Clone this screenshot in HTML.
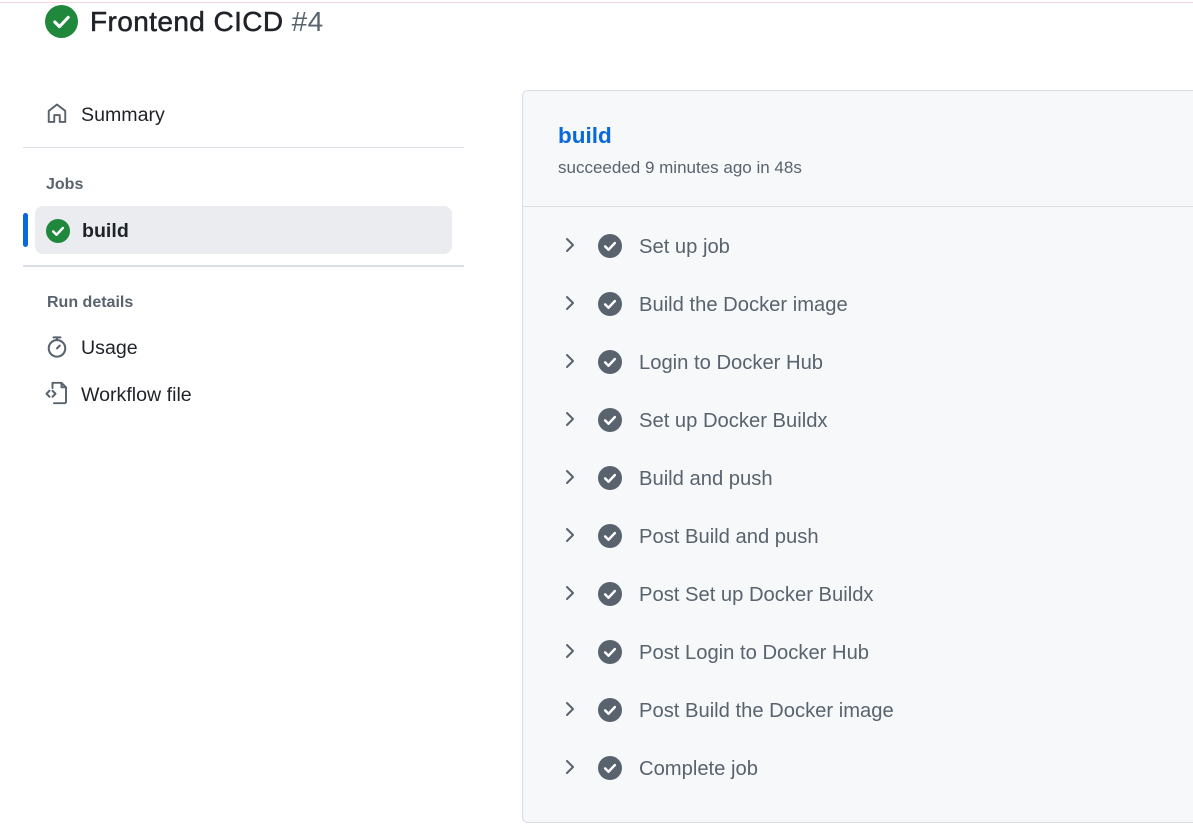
<!DOCTYPE html>
<html><head><style>
*{margin:0;padding:0;box-sizing:border-box}
body{width:1193px;height:826px;background:#fff;font-family:"Liberation Sans",sans-serif;position:relative;overflow:hidden;color:#1f2328}
.abs{position:absolute}
.topline{left:0;top:2px;width:1193px;height:1px;background:#f5d5db}
.title{left:90px;top:4px;font-size:28px;line-height:36px;color:#1f2328;letter-spacing:0.4px;-webkit-text-stroke:0.5px #1f2328}
.title span{color:#59636e;-webkit-text-stroke:0}
.nav{font-size:19.6px;line-height:24px;color:#1f2328}
.hdr{font-size:16px;color:#59636e;font-weight:bold}
.sep{height:1px;background:#d8dee4;left:23px;width:441px}
.panel{left:522px;top:90px;width:700px;height:733px;background:#f6f8fa;border:1px solid #d8dee4;border-radius:6px}
.step{left:0;font-size:20.2px;color:#59636e;line-height:24px}
</style></head><body>
<div class="abs topline"></div>
<svg class="abs" style="left:45px;top:5px" width="33" height="33" viewBox="0 0 32 32"><circle cx="16" cy="16" r="16" fill="#1f883d"/><path d="M9.5 16.5l4.5 4.5 8.5-9" stroke="#fff" stroke-width="3" fill="none" stroke-linecap="round" stroke-linejoin="round"/></svg>
<div class="abs title">Frontend CICD <span>#4</span></div>

<svg class="abs" style="left:46px;top:102px" width="22" height="22" viewBox="0 0 16 16"><path d="M2 14.5V6.5L8 1.8l6 4.7v8H10V9.5H6v5z" fill="none" stroke="#59636e" stroke-width="1.4" stroke-linejoin="round"/></svg>
<div class="abs nav" style="left:81px;top:103px">Summary</div>
<div class="abs sep" style="top:147px"></div>
<div class="abs hdr" style="left:46px;top:176px">Jobs</div>
<div class="abs" style="left:23px;top:213px;width:5px;height:34px;background:#0969da;border-radius:3px"></div>
<div class="abs" style="left:35px;top:206px;width:417px;height:48px;background:#eaecef;border-radius:8px"></div>
<svg class="abs" style="left:46px;top:219px" width="24" height="24" viewBox="0 0 32 32"><circle cx="16" cy="16" r="16" fill="#1f883d"/><path d="M9.5 16.5l4.5 4.5 8.5-9" stroke="#fff" stroke-width="3.2" fill="none" stroke-linecap="round" stroke-linejoin="round"/></svg>
<div class="abs nav" style="left:82px;top:219px;font-weight:bold">build</div>
<div class="abs sep" style="top:265px;height:2px"></div>
<div class="abs hdr" style="left:47px;top:294px">Run details</div>
<svg class="abs" style="left:46px;top:335px" width="22" height="24" viewBox="0 0 16 17"><circle cx="8" cy="9.5" r="6" fill="none" stroke="#59636e" stroke-width="1.5"/><path d="M5.5 1.5h5M8 1.5v2M8 9.5l2-2" stroke="#59636e" stroke-width="1.5" stroke-linecap="round"/></svg>
<div class="abs nav" style="left:81px;top:336px">Usage</div>
<svg class="abs" style="left:45px;top:381px" width="24" height="24" viewBox="0 0 16 16"><path d="M5 1.2h6l3 3v9.6a1 1 0 0 1-1 1H6M5 1.2v3.5M11 1.2v3h3M3 6.5L1 8.5l2 2M5 6.5l2 2-2 2" fill="none" stroke="#59636e" stroke-width="1.3" stroke-linejoin="round" stroke-linecap="round"/></svg>
<div class="abs nav" style="left:81px;top:383px">Workflow file</div>

<div class="abs panel">
<div class="abs" style="left:35px;top:32px;font-size:22.5px;color:#0969da;font-weight:bold">build</div>
<div class="abs" style="left:35px;top:67px;font-size:17px;color:#59636e">succeeded 9 minutes ago in 48s</div>
<div class="abs" style="left:0;top:115px;width:100%;height:1px;background:#d8dee4"></div>
</div>
<div id="steps"></div>
<script>
var s=["Set up job","Build the Docker image","Login to Docker Hub","Set up Docker Buildx","Build and push","Post Build and push","Post Set up Docker Buildx","Post Login to Docker Hub","Post Build the Docker image","Complete job"];
var h="";
s.forEach(function(t,i){var y=246+i*58;
h+='<svg class="abs" style="left:563px;top:'+(y-10)+'px" width="14" height="18" viewBox="0 0 14 18"><path d="M4 3l6 6-6 6" fill="none" stroke="#59636e" stroke-width="2" stroke-linecap="round" stroke-linejoin="round"/></svg>';
h+='<svg class="abs" style="left:598px;top:'+(y-12)+'px" width="24" height="24" viewBox="0 0 32 32"><circle cx="16" cy="16" r="16" fill="#59636e"/><path d="M9.5 16.5l4.5 4.5 8.5-9" stroke="#fff" stroke-width="3.2" fill="none" stroke-linecap="round" stroke-linejoin="round"/></svg>';
h+='<div class="abs step" style="left:639px;top:'+(y-11)+'px">'+t+'</div>';});
document.getElementById("steps").innerHTML=h;
</script>
</body></html>
